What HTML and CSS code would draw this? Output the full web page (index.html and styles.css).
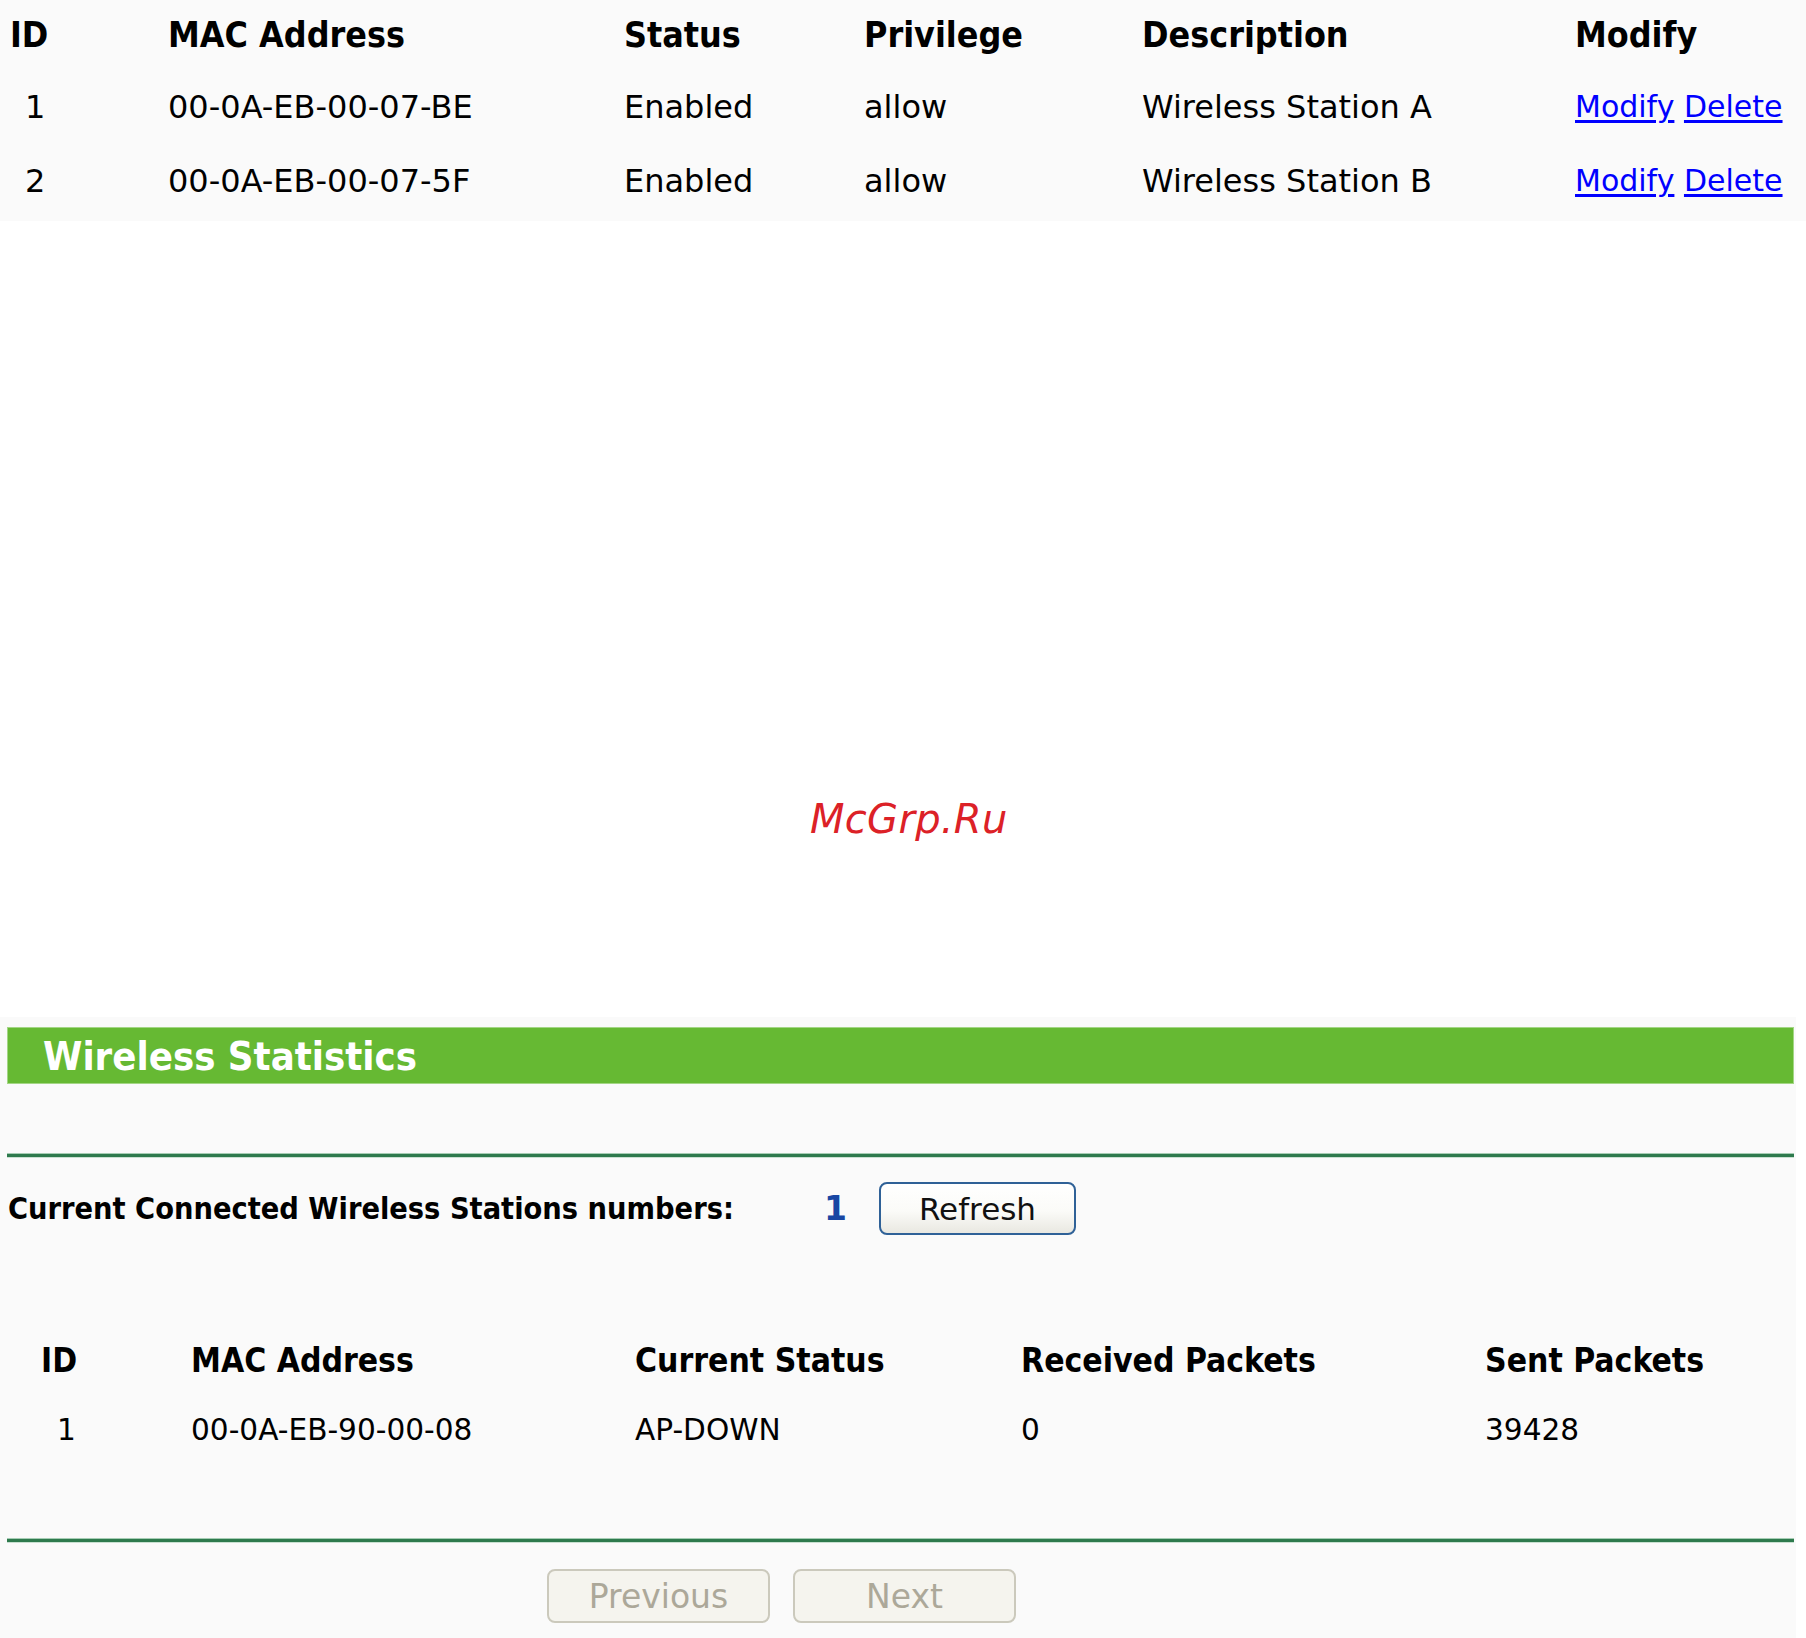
FILE: index.html
```html
<!DOCTYPE html>
<html lang="en">
<head>
<meta charset="utf-8">
<title>Wireless Statistics</title>
<link rel="stylesheet" href="styles.css">
</head>
<body>
<div class="list-panel">
  <div class="list-grid">
    <div class="th">ID</div>
    <div class="th">MAC Address</div>
    <div class="th">Status</div>
    <div class="th">Privilege</div>
    <div class="th">Description</div>
    <div class="th">Modify</div>

    <div class="td id">1</div>
    <div class="td">00-0A-EB-00-07-BE</div>
    <div class="td">Enabled</div>
    <div class="td">allow</div>
    <div class="td">Wireless Station A</div>
    <div class="td links"><a href="#">Modify</a> <a href="#">Delete</a></div>

    <div class="td id">2</div>
    <div class="td">00-0A-EB-00-07-5F</div>
    <div class="td">Enabled</div>
    <div class="td">allow</div>
    <div class="td">Wireless Station B</div>
    <div class="td links"><a href="#">Modify</a> <a href="#">Delete</a></div>
  </div>
</div>

<div class="gap"></div>
<div class="watermark">McGrp.Ru</div>

<div class="stats-panel">
  <div class="title-bar">Wireless Statistics</div>
  <div class="rule rule-top"></div>
  <div class="count-row">
    <div class="count-label">Current Connected Wireless Stations numbers:</div>
    <div class="count-value">1</div>
    <button class="btn btn-refresh" type="button">Refresh</button>
  </div>
  <div class="stats-grid">
    <div class="sh id">ID</div>
    <div class="sh">MAC Address</div>
    <div class="sh">Current Status</div>
    <div class="sh">Received Packets</div>
    <div class="sh">Sent Packets</div>

    <div class="sd id">1</div>
    <div class="sd">00-0A-EB-90-00-08</div>
    <div class="sd">AP-DOWN</div>
    <div class="sd">0</div>
    <div class="sd">39428</div>
  </div>
  <div class="rule rule-bottom"></div>
  <div class="pager">
    <button class="btn btn-disabled" type="button" disabled>Previous</button>
    <button class="btn btn-disabled" type="button" disabled>Next</button>
  </div>
</div>
</body>
</html>
```

FILE: styles.css
```css
html, body {
  margin: 0;
  padding: 0;
  background: #ffffff;
}

body {
  width: 1806px;
  font-family: "DejaVu Sans", "Verdana", sans-serif;
  color: #000000;
  position: relative;
}

/* ---------- top list ---------- */
.list-panel {
  background: #fafafa;
  height: 221px;
  box-sizing: border-box;
  padding-left: 10px;
}

.list-grid {
  display: grid;
  grid-template-columns: 158px 456px 240px 278px 433px 1fr;
  grid-template-rows: 70px 74px 74px;
  align-items: center;
}

.th {
  font-family: "DejaVu Sans Condensed", "DejaVu Sans", sans-serif;
  font-stretch: condensed;
  font-weight: bold;
  font-size: 35.5px;
  line-height: 1.2;
  white-space: nowrap;
}

.td {
  font-size: 32px;
  line-height: 1.2;
  white-space: nowrap;
}

.td.id {
  padding-left: 15px;
}

.links {
  font-size: 30px;
}

.links a {
  color: #0000ff;
  text-decoration: underline;
  text-underline-offset: 3px;
}

/* ---------- gap + watermark ---------- */
.gap {
  height: 796px;
}

.watermark {
  position: absolute;
  left: 810px;
  top: 799px;
  font-family: "DejaVu Sans", sans-serif;
  font-style: oblique;
  font-size: 40px;
  line-height: 1;
  color: #dc2127;
  letter-spacing: 0.3px;
}

/* ---------- statistics panel ---------- */
.stats-panel {
  width: 1796px;
  box-sizing: border-box;
  background: #fafafa;
  padding: 10px 2px 15px 7px;
}

.title-bar {
  height: 57px;
  box-sizing: border-box;
  background: #66b933;
  border: 1px solid #a3d685;
  padding-left: 35px;
  display: flex;
  align-items: center;
  font-family: "DejaVu Sans Condensed", "DejaVu Sans", sans-serif;
  font-stretch: condensed;
  font-weight: bold;
  font-size: 39.7px;
  color: #ffffff;
  white-space: nowrap;
}

.rule {
  height: 3px;
  background: #2e7a4d;
  border-top: 1px solid #a6cdb4;
  border-bottom: 1px solid #c9e0d1;
}

.rule-top {
  margin-top: 69px;
}

.rule-bottom {
  margin-top: 73px;
}

.count-row {
  margin-top: 24px;
  height: 53px;
  display: grid;
  grid-template-columns: 817px 55px auto;
  align-items: center;
  justify-items: start;
}

.count-label {
  font-family: "DejaVu Sans Condensed", "DejaVu Sans", sans-serif;
  font-stretch: condensed;
  font-weight: bold;
  font-size: 30.4px;
  white-space: nowrap;
  padding-left: 1px;
}

.count-value {
  font-weight: bold;
  font-size: 33px;
  color: #1846a3;
}

.btn {
  box-sizing: border-box;
  height: 53px;
  border-radius: 8px;
  font-family: "DejaVu Sans", sans-serif;
  padding: 0;
  margin: 0;
  cursor: default;
}

.btn-refresh {
  width: 197px;
  border: 2px solid #2f6197;
  background: linear-gradient(#ffffff 0%, #fbfbf8 55%, #e9e8e1 100%);
  color: #111111;
  font-size: 31px;
}

.stats-grid {
  margin-top: 90px;
  display: grid;
  grid-template-columns: 184px 444px 386px 464px 1fr;
  grid-template-rows: 70px 70px;
  align-items: center;
}

.sh {
  font-family: "DejaVu Sans Condensed", "DejaVu Sans", sans-serif;
  font-stretch: condensed;
  font-weight: bold;
  font-size: 33.4px;
  white-space: nowrap;
}

.sh.id {
  padding-left: 34px;
}

.sd {
  font-size: 29.6px;
  white-space: nowrap;
}

.sd.id {
  padding-left: 50px;
}

.pager {
  margin-top: 26px;
  padding-left: 540px;
  display: flex;
  gap: 23px;
}

.btn-disabled {
  width: 223px;
  height: 54px;
  border: 2px solid #cbc9bc;
  background: #f5f4ee;
  color: #aca899;
  font-size: 33px;
}
```
